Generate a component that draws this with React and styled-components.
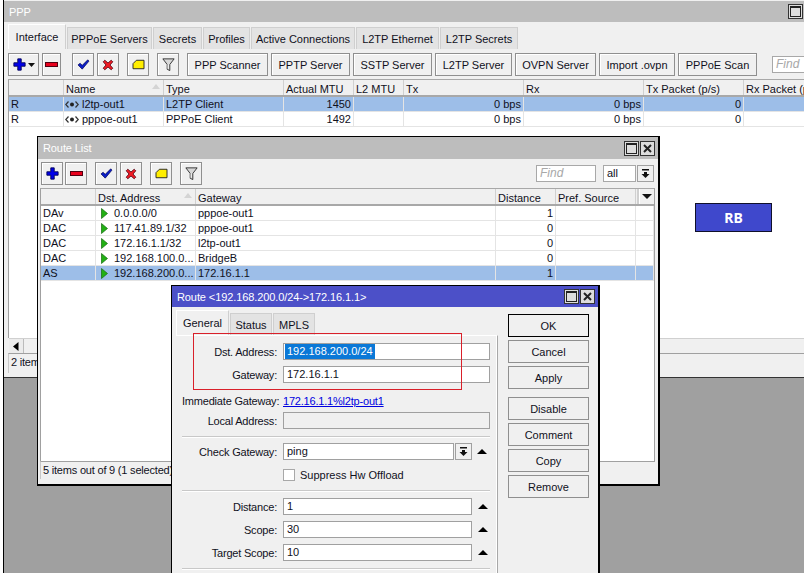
import React from "react";
import styled, { createGlobalStyle } from "styled-components";

const GlobalStyle = createGlobalStyle`
  html, body {
    margin: 0;
    padding: 0;
    background: #fff;
    font-family: "Liberation Sans", Arial, sans-serif;
    font-size: 11px;
    color: #10101c;
  }
  * { box-sizing: border-box; }
`;

const Page = styled.div`
  position: relative;
  width: 804px;
  height: 573px;
  overflow: hidden;
  padding-left: 3px;
`;

/* MDI area behind the windows */
const Workspace = styled.div`
  height: 573px;
  background: #a0a0a0;
  border-left: 1px solid #000;
`;

const PppWindow = styled.div`
  display: flex;
  flex-direction: column;
  height: 378px;
  background: #f0f0f0;
  padding-top: 1px;
  border-bottom: 1px solid #333;
`;

const Floating = styled.div`
  position: absolute;
  left: ${(p) => p.$left}px;
  top: ${(p) => p.$top}px;
  width: ${(p) => p.$width}px;
  height: ${(p) => p.$height}px;
  background: #f0f0f0;
  border: 1px solid #000;
  border-width: 1px 2px 2px 1px;
  display: flex;
  flex-direction: column;
`;

const TitleBar = styled.div`
  flex: none;
  height: ${(p) => p.$h || 21}px;
  display: flex;
  align-items: center;
  justify-content: space-between;
  padding: 0 ${(p) => p.$pr || 3}px 0 5px;
  background: ${(p) => (p.$active ? "#4c50c8" : "#bdbdbd")};
  color: #fff;
  letter-spacing: -0.1px;
  white-space: nowrap;
`;

const TitleButtons = styled.div`
  display: flex;
  gap: 1px;
`;

const TitleBtn = styled.div`
  width: 15px;
  height: 15px;
  border: 1px solid #333;
  background: #ddd;
  display: flex;
  align-items: center;
  justify-content: center;
`;

const Tabs = styled.div`
  flex: none;
  display: flex;
  align-items: flex-end;
  gap: ${(p) => p.$gap ?? 2}px;
  padding-left: ${(p) => p.$pl}px;
  height: ${(p) => p.$h}px;
  margin-top: ${(p) => p.$mt || 0}px;
`;

const Tab = styled.div`
  width: ${(p) => p.$w}px;
  height: ${(p) => (p.$active ? p.$tall : p.$tall - 3)}px;
  display: flex;
  align-items: center;
  justify-content: center;
  white-space: nowrap;
  background: ${(p) => (p.$active ? "#f0f0f0" : "#e3e3e3")};
  border: 1px solid #cfcfcf;
  border-bottom: none;
  border-top-color: ${(p) => (p.$active ? "#fff" : "#cfcfcf")};
  border-left-color: ${(p) => (p.$active ? "#fff" : "#cfcfcf")};
`;

const Toolbar = styled.div`
  flex: none;
  display: flex;
  align-items: center;
  height: 23px;
  margin-top: ${(p) => p.$mt || 0}px;
  padding: 0 ${(p) => p.$pr || 0}px 0 ${(p) => p.$pl}px;
  overflow: hidden;
`;

const ToolBtn = styled.div`
  flex: none;
  width: ${(p) => p.$w || 22}px;
  height: 23px;
  margin-left: ${(p) => p.$ml || 0}px;
  display: flex;
  align-items: center;
  justify-content: center;
  gap: 2px;
  background: #f0f0f0;
  border: 1px solid #8f8f8f;
  box-shadow: inset 1px 1px 0 #fff;
  white-space: nowrap;
`;

const SearchBox = styled.div`
  flex: none;
  width: ${(p) => p.$w}px;
  height: 17px;
  margin-left: ${(p) => p.$ml || 0}px;
  padding-left: 3px;
  line-height: 15px;
  background: #fff;
  border: 1px solid #a8a8a8;
  font-size: ${(p) => (p.$plain ? 11 : 12)}px;
  font-style: ${(p) => (p.$plain ? "normal" : "italic")};
  color: ${(p) => (p.$plain ? "#10101c" : "#a8a8a8")};
`;

const Spacer = styled.div`
  flex: 1;
`;

const Table = styled.div`
  flex: 1;
  min-height: 0;
  margin: ${(p) => p.$margin};
  background: #fff;
  border-left: 1px solid #a0a0a0;
  border-top: 1px solid #a8a8a8;
  border-right: ${(p) => (p.$framed ? "1px solid #a0a0a0" : "none")};
  overflow: hidden;
`;

const HeadRow = styled.div`
  display: grid;
  grid-template-columns: ${(p) => p.$cols};
  height: 17px;
  background: #f0f0f0;
  border-bottom: 2px solid #a8a8a8;
`;

const HeadCell = styled.div`
  position: relative;
  padding-left: 2px;
  line-height: 18px;
  white-space: nowrap;
  overflow: hidden;
  border-right: 1px solid #d0d0d0;
`;

const SortMark = styled.span`
  position: absolute;
  right: 3px;
  top: 4px;
  width: 0;
  height: 0;
  border-left: 4px solid transparent;
  border-right: 4px solid transparent;
  border-bottom: 5px solid #d4d4d4;
`;

const ColumnMenu = styled.div`
  display: flex;
  align-items: center;
  justify-content: flex-end;
  padding-right: 2px;
  height: 15px;
  box-shadow: inset 1px 0 0 #fff;
  border-left: 2px solid #d0d0d0;
  margin-left: 1px;
`;

const Row = styled.div`
  display: grid;
  grid-template-columns: ${(p) => p.$cols};
  height: 15px;
  background: ${(p) => (p.$selected ? "#9dbee8" : "#fff")};
  border-bottom: 1px solid #e4e4e4;
`;

const Cell = styled.div`
  display: flex;
  align-items: center;
  justify-content: ${(p) => (p.$right ? "flex-end" : "flex-start")};
  gap: ${(p) => p.$gap || 3}px;
  padding: 0 2px 0 ${(p) => p.$pl ?? 2}px;
  line-height: 14px;
  white-space: nowrap;
  overflow: hidden;
  border-right: 1px solid #e4e4e4;

  svg {
    flex: none;
  }
`;

const ScrollBar = styled.div`
  flex: none;
  height: 15px;
  margin-left: 5px;
  display: flex;
  background: #f0f0f0;
  border-top: 1px solid #d0d0d0;
`;

const ScrollArrow = styled.div`
  width: 15px;
  display: flex;
  align-items: center;
  justify-content: center;
  background: #ececec;
  border-right: 1px solid #bbb;
`;

const Status = styled.div`
  flex: none;
  height: ${(p) => p.$h}px;
  margin: 0 ${(p) => p.$mr || 0}px ${(p) => p.$mb || 0}px ${(p) => p.$ml}px;
  padding-left: 2px;
  line-height: 17px;
  letter-spacing: -0.2px;
  white-space: nowrap;
  overflow: hidden;
  border-top: 1px solid #a0a0a0;
  border-left: 1px solid #c8c8c8;
`;

const DialogBody = styled.div`
  flex: 1;
  min-height: 0;
  display: flex;
`;

const DialogMain = styled.div`
  width: 326px;
  flex: none;
  padding-left: 4px;
`;

const Panel = styled.div`
  height: 300px;
  padding: 7px 7px 0 6px;
  border-top: 1px solid #fff;
  border-right: 1px solid #a8a8a8;
  box-shadow: inset -1px 0 0 #fff;
`;

const FieldRow = styled.div`
  display: grid;
  grid-template-columns: 95px 1fr;
  column-gap: 6px;
  align-items: center;
  height: 17px;
  margin-top: ${(p) => p.$mt || 0}px;
`;

const Label = styled.div`
  text-align: right;
  letter-spacing: -0.2px;
  white-space: nowrap;
`;

const FieldLine = styled.div`
  display: flex;
  align-items: center;
`;

const Input = styled.div`
  flex: 1;
  height: 17px;
  padding-left: ${(p) => (p.$selected ? 1 : 3)}px;
  line-height: 15px;
  background: ${(p) => (p.$disabled ? "#f0f0f0" : "#fff")};
  border: 1px solid #a0a0a0;
  max-width: ${(p) => p.$w || 207}px;
  display: flex;
  align-items: center;
`;

const Selection = styled.span`
  background: #0a78d7;
  color: #fff;
  padding: 0 2px;
  line-height: 15px;
`;

const LinkText = styled.span`
  color: #0000e0;
  text-decoration: underline;
  letter-spacing: -0.2px;
  white-space: nowrap;
`;

const DropBtn = styled.div`
  flex: none;
  width: 17px;
  height: 17px;
  margin-left: 1px;
  display: flex;
  align-items: center;
  justify-content: center;
  background: #f0f0f0;
  border: 1px solid #a0a0a0;
`;

const UpMark = styled.span`
  flex: none;
  width: 0;
  height: 0;
  margin-left: ${(p) => p.$ml}px;
  border-left: 5px solid transparent;
  border-right: 5px solid transparent;
  border-bottom: 5px solid #000;
`;

const CheckBox = styled.span`
  flex: none;
  width: 12px;
  height: 12px;
  margin-right: 5px;
  background: #fff;
  border: 1px solid #a8a8a8;
`;

const Divider = styled.div`
  height: 1px;
  margin: ${(p) => p.$mt}px 0 ${(p) => p.$mb}px;
  background: #c8c8c8;
  box-shadow: 0 1px 0 #fff;
`;

const ButtonColumn = styled.div`
  width: 81px;
  margin-left: 10px;
  padding-top: 7px;
  display: flex;
  flex-direction: column;
  gap: 3px;
`;

const DlgButton = styled.div`
  height: 23px;
  flex: none;
  margin-top: ${(p) => p.$mt || 0}px;
  display: flex;
  align-items: center;
  justify-content: center;
  background: #f0f0f0;
  border: 1px solid ${(p) => (p.$default ? "#000" : "#8f8f8f")};
`;

/* the red frame somebody drew over the screenshot */
const RedFrame = styled.div`
  position: absolute;
  left: 193px;
  top: 333px;
  width: 269px;
  height: 57px;
  border: 1px solid #d9202a;
`;

const Badge = styled.div`
  position: absolute;
  left: 695px;
  top: 203px;
  width: 77px;
  height: 29px;
  display: flex;
  align-items: center;
  justify-content: center;
  background: #3f48cc;
  border: 1px solid #10102a;
  color: #fff;
  font-family: "Noto Sans", sans-serif;
  font-weight: 700;
  font-size: 14px;
`;

const PlusIcon = () => (
  <svg width="13" height="13" viewBox="0 0 15 15">
    <path d="M5.5 1h4v4.5H14v4H9.5V14h-4V9.5H1v-4h4.5z" fill="#0000e8" stroke="#000050" strokeWidth="1" />
  </svg>
);
const MinusIcon = () => (
  <svg width="13" height="7" viewBox="0 0 13 7">
    <rect x="0.5" y="1.5" width="12" height="4" fill="#e8001c" stroke="#500010" />
  </svg>
);
const CheckIcon = () => (
  <svg width="13" height="11" viewBox="0 0 15 13">
    <path d="M1 7l2.5-2 2.5 2.5L12.5 1l1.5 1.5-8 9.5z" fill="#0a1ec8" stroke="#000050" strokeWidth="0.8" />
  </svg>
);
const CrossIcon = () => (
  <svg width="12" height="12" viewBox="0 0 15 15">
    <path d="M1.5 3.5l2-2 4 3.5 4-3.5 2 2L10 7.5l3.5 4-2 2-4-3.5-4 3.5-2-2L5 7.5z" fill="#ee1c24" stroke="#500010" strokeWidth="1" />
  </svg>
);
const NoteIcon = () => (
  <svg width="13" height="11" viewBox="0 0 15 13">
    <path d="M5 1.5h9v10H1V5.5z" fill="#ffee00" stroke="#222" strokeWidth="1.1" />
  </svg>
);
const FilterIcon = () => (
  <svg width="13" height="15" viewBox="0 0 15 16">
    <path d="M1 1.5h13L9 8v7L6 13.5V8z" fill="#d8d8d8" stroke="#333" strokeWidth="1.1" />
    <path d="M7 8v5" stroke="#fff" strokeWidth="1" />
  </svg>
);
const CaretDown = ({ w = 7, h = 4 }) => (
  <svg width={w} height={h} viewBox="0 0 7 4" preserveAspectRatio="none">
    <path d="M0 0h7L3.5 4z" fill="#111" />
  </svg>
);
const DropIcon = () => (
  <svg width="9" height="10" viewBox="0 0 9 10">
    <path d="M1 0h7v1.5H1zM3 3h3v2h2.5L4.5 9 .5 5H3z" fill="#111" />
  </svg>
);
const PlayIcon = () => (
  <svg width="7" height="11" viewBox="0 0 7 11">
    <path d="M0.5 0.5L6.5 5.5 0.5 10.5z" fill="#22b014" stroke="#146a10" strokeWidth="0.7" />
  </svg>
);
const TunnelIcon = () => (
  <svg width="14" height="7" viewBox="0 0 14 7">
    <path d="M3.5 0.5L0.8 3.5l2.7 3M10.5 0.5l2.7 3-2.7 3" fill="none" stroke="#333" strokeWidth="1.2" />
    <circle cx="7" cy="3.5" r="2" fill="#222" />
  </svg>
);
const LeftArrow = () => (
  <svg width="6" height="9" viewBox="0 0 6 9">
    <path d="M5.5 0v9L0 4.5z" fill="#000" />
  </svg>
);
const MaxIcon = () => (
  <svg width="11" height="11" viewBox="0 0 11 11">
    <rect x="0.5" y="0.5" width="10" height="10" fill="none" stroke="#222" />
    <path d="M0 1h11" stroke="#222" strokeWidth="2" />
  </svg>
);
const CloseIcon = () => (
  <svg width="9" height="9" viewBox="0 0 9 9">
    <path d="M1 1l7 7M8 1L1 8" stroke="#222" strokeWidth="2" />
  </svg>
);

const pppCols = "55px 100px 120px 70px 50px 120px 120px 100px 100px";
const pppHead = ["", "Name", "Type", "Actual MTU", "L2 MTU", "Tx", "Rx", "Tx Packet (p/s)", "Rx Packet (p/s)"];
const pppRows = [
  { flag: "R", name: "l2tp-out1", type: "L2TP Client", mtu: "1450", selected: true },
  { flag: "R", name: "pppoe-out1", type: "PPPoE Client", mtu: "1492" },
];
const pppTabs = [
  ["Interface", 58],
  ["PPPoE Servers", 85],
  ["Secrets", 49],
  ["Profiles", 47],
  ["Active Connections", 104],
  ["L2TP Ethernet", 83],
  ["L2TP Secrets", 78],
];
const pppActions = [
  ["PPP Scanner", 81, 8],
  ["PPTP Server", 79, 3],
  ["SSTP Server", 79, 3],
  ["L2TP Server", 77, 3],
  ["OVPN Server", 81, 3],
  ["Import .ovpn", 76, 3],
  ["PPPoE Scan", 79, 3],
];

const routeCols = "55px 100px 300px 60px 80px 1fr";
const routeRows = [
  { flag: "DAv", dst: "0.0.0.0/0", gw: "pppoe-out1", dist: "1" },
  { flag: "DAC", dst: "117.41.89.1/32", gw: "pppoe-out1", dist: "0" },
  { flag: "DAC", dst: "172.16.1.1/32", gw: "l2tp-out1", dist: "0" },
  { flag: "DAC", dst: "192.168.100.0...", gw: "BridgeB", dist: "0" },
  { flag: "AS", dst: "192.168.200.0...", gw: "172.16.1.1", dist: "1", selected: true },
];

const sideButtons = [
  ["OK", 0, true],
  ["Cancel"],
  ["Apply"],
  ["Disable", 5],
  ["Comment"],
  ["Copy"],
  ["Remove"],
];

const App = () => (
  <>
    <GlobalStyle />
    <Page>
      <Workspace>
        <PppWindow>
          <TitleBar $h={21} $pr={1}>
            PPP
            <TitleBtn><MaxIcon /></TitleBtn>
          </TitleBar>
          <Tabs $pl={4} $h={25} $gap={1} $mt={2}>
            {pppTabs.map(([label, w], i) => (
              <Tab key={label} $w={w} $tall={25} $active={i === 0}>{label}</Tab>
            ))}
          </Tabs>
          <Toolbar $pl={4} $mt={4}>
            <ToolBtn $w={31}><PlusIcon /><CaretDown /></ToolBtn>
            <ToolBtn $w={19} $ml={3}><MinusIcon /></ToolBtn>
            <ToolBtn $ml={11}><CheckIcon /></ToolBtn>
            <ToolBtn $ml={3}><CrossIcon /></ToolBtn>
            <ToolBtn $ml={8}><NoteIcon /></ToolBtn>
            <ToolBtn $ml={8}><FilterIcon /></ToolBtn>
            {pppActions.map(([label, w, ml]) => (
              <ToolBtn key={label} $w={w} $ml={ml}>{label}</ToolBtn>
            ))}
            <SearchBox $w={60} $ml={15}>Find</SearchBox>
          </Toolbar>
          <Table $margin="3px 0 0 4px">
            <HeadRow $cols={pppCols}>
              {pppHead.map((h, i) => (
                <HeadCell key={i}>
                  {h}
                  {h === "Name" && <SortMark />}
                </HeadCell>
              ))}
            </HeadRow>
            {pppRows.map((r) => (
              <Row key={r.name} $cols={pppCols} $selected={r.selected}>
                <Cell>{r.flag}</Cell>
                <Cell $pl={1}><TunnelIcon />{r.name}</Cell>
                <Cell>{r.type}</Cell>
                <Cell $right>{r.mtu}</Cell>
                <Cell />
                <Cell $right>0 bps</Cell>
                <Cell $right>0 bps</Cell>
                <Cell $right>0</Cell>
                <Cell />
              </Row>
            ))}
          </Table>
          <ScrollBar>
            <ScrollArrow><LeftArrow /></ScrollArrow>
          </ScrollBar>
          <Status $h={20} $ml={4} $mb={4}>2 items</Status>
        </PppWindow>
      </Workspace>

      <Floating $left={37} $top={136} $width={623} $height={350}>
        <TitleBar $h={22} $pr={3}>
          Route List
          <TitleButtons>
            <TitleBtn><MaxIcon /></TitleBtn>
            <TitleBtn><CloseIcon /></TitleBtn>
          </TitleButtons>
        </TitleBar>
        <Toolbar $pl={3} $pr={4} $mt={3}>
          <ToolBtn><PlusIcon /></ToolBtn>
          <ToolBtn $ml={2}><MinusIcon /></ToolBtn>
          <ToolBtn $ml={8}><CheckIcon /></ToolBtn>
          <ToolBtn $ml={3}><CrossIcon /></ToolBtn>
          <ToolBtn $ml={8}><NoteIcon /></ToolBtn>
          <ToolBtn $ml={8}><FilterIcon /></ToolBtn>
          <Spacer />
          <SearchBox $w={60}>Find</SearchBox>
          <SearchBox $w={33} $ml={7} $plain>all</SearchBox>
          <DropBtn><DropIcon /></DropBtn>
        </Toolbar>
        <Table $margin="3px 3px 0 2px" $framed>
          <HeadRow $cols={routeCols}>
            <HeadCell />
            <HeadCell>Dst. Address<SortMark /></HeadCell>
            <HeadCell>Gateway</HeadCell>
            <HeadCell>Distance</HeadCell>
            <HeadCell>Pref. Source</HeadCell>
            <ColumnMenu><CaretDown w={10} h={5} /></ColumnMenu>
          </HeadRow>
          {routeRows.map((r) => (
            <Row key={r.dst} $cols={routeCols} $selected={r.selected}>
              <Cell>{r.flag}</Cell>
              <Cell $pl={5} $gap={6}><PlayIcon />{r.dst}</Cell>
              <Cell>{r.gw}</Cell>
              <Cell $right>{r.dist}</Cell>
              <Cell />
              <Cell />
            </Row>
          ))}
        </Table>
        <Status $h={18} $ml={2} $mr={3} $mb={5}>5 items out of 9 (1 selected)</Status>
      </Floating>

      <Badge>RB</Badge>

      <Floating $left={171} $top={285} $width={429} $height={300}>
        <TitleBar $active $h={21} $pr={3}>
          {"Route <192.168.200.0/24->172.16.1.1>"}
          <TitleButtons>
            <TitleBtn><MaxIcon /></TitleBtn>
            <TitleBtn><CloseIcon /></TitleBtn>
          </TitleButtons>
        </TitleBar>
        <DialogBody>
          <DialogMain>
            <Tabs $pl={0} $h={28} $gap={1}>
              <Tab $w={53} $tall={25} $active>General</Tab>
              <Tab $w={42} $tall={25}>Status</Tab>
              <Tab $w={42} $tall={25}>MPLS</Tab>
            </Tabs>
            <Panel>
              <FieldRow>
                <Label>Dst. Address:</Label>
                <Input $selected><Selection>192.168.200.0/24</Selection></Input>
              </FieldRow>
              <FieldRow $mt={6}>
                <Label>Gateway:</Label>
                <Input>172.16.1.1</Input>
              </FieldRow>
              <FieldRow $mt={9}>
                <Label>Immediate Gateway:</Label>
                <LinkText>172.16.1.1%l2tp-out1</LinkText>
              </FieldRow>
              <FieldRow $mt={3}>
                <Label>Local Address:</Label>
                <Input $disabled />
              </FieldRow>
              <Divider $mt={7} $mb={6} />
              <FieldRow>
                <Label>Check Gateway:</Label>
                <FieldLine>
                  <Input $w={171}>ping</Input>
                  <DropBtn><DropIcon /></DropBtn>
                  <UpMark $ml={5} />
                </FieldLine>
              </FieldRow>
              <FieldRow $mt={6}>
                <span />
                <FieldLine><CheckBox />Suppress Hw Offload</FieldLine>
              </FieldRow>
              <Divider $mt={7} $mb={7} />
              <FieldRow>
                <Label>Distance:</Label>
                <FieldLine><Input $w={189}>1</Input><UpMark $ml={6} /></FieldLine>
              </FieldRow>
              <FieldRow $mt={6}>
                <Label>Scope:</Label>
                <FieldLine><Input $w={189}>30</Input><UpMark $ml={6} /></FieldLine>
              </FieldRow>
              <FieldRow $mt={6}>
                <Label>Target Scope:</Label>
                <FieldLine><Input $w={189}>10</Input><UpMark $ml={6} /></FieldLine>
              </FieldRow>
              <Divider $mt={7} $mb={0} />
            </Panel>
          </DialogMain>
          <ButtonColumn>
            {sideButtons.map(([label, mt, def]) => (
              <DlgButton key={label} $mt={mt} $default={def}>{label}</DlgButton>
            ))}
          </ButtonColumn>
        </DialogBody>
      </Floating>

      <RedFrame />
    </Page>
  </>
);

export default App;
